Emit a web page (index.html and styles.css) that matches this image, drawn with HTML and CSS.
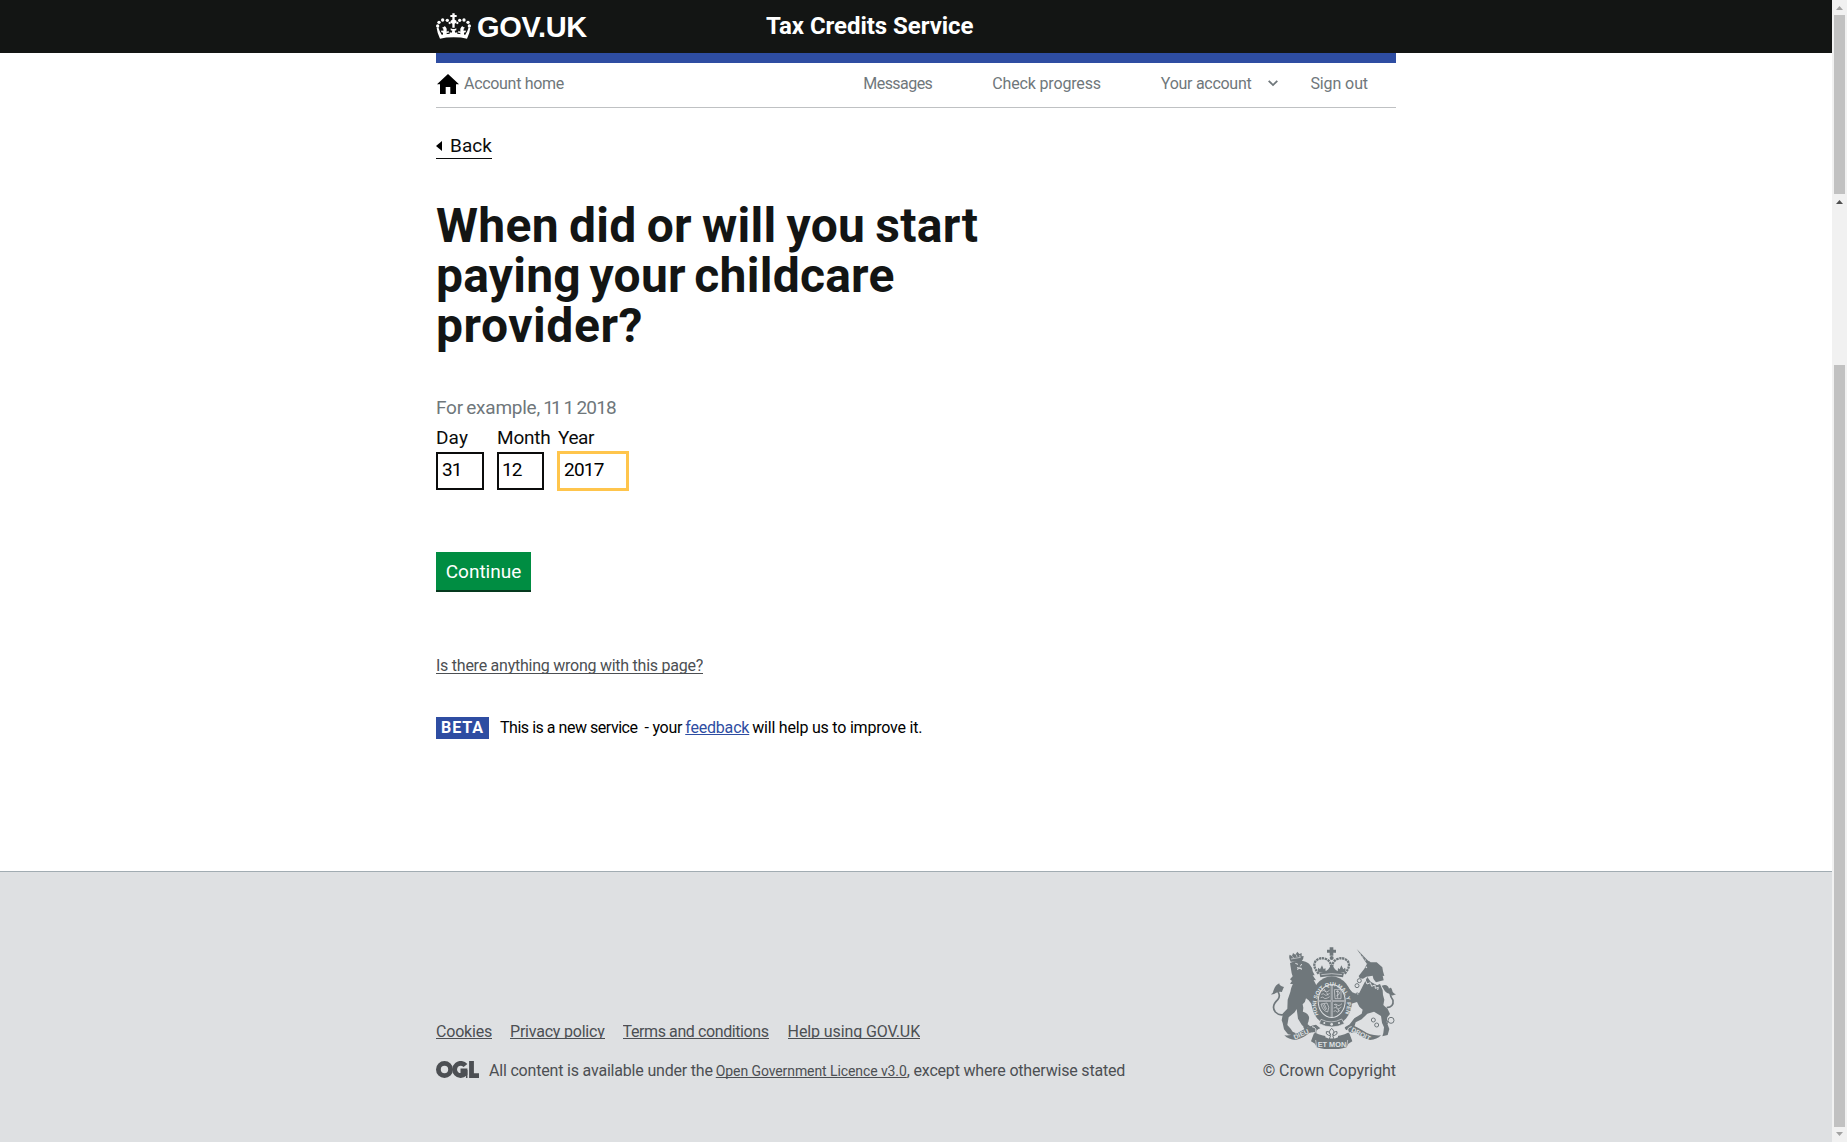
FILE: index.html
```html
<!DOCTYPE html>
<html lang="en">
<head>
<meta charset="utf-8">
<title>Tax Credits Service</title>
<link rel="stylesheet" href="styles.css">
</head>
<body>
<div class="page">
  <header class="header">
    <div class="container header-inner">
      <a class="logo">
        <svg class="crown" viewBox="48 38 105 78" fill="#fff">
          <path d="M97 39h7v5h6v6h-6v8q6 1 6 6-2 5-6 6v12h-7V70q-5-1-6-6 1-5 6-6v-8h-6v-6h6z"/>
          <path d="M50 83l5-2q3 12 10 22 35-6 71 0 7-10 10-22l5 2q-2 17-10 32-16-4-40-4t-41 4q-8-15-10-32z"/>
          <path d="M71 80q3-4 6 0l3 5v9l6-3v7l-6-1v7H69v-7l-6-2 2-5 5 2v-7l-4-3zM130 80q-3-4-6 0l-3 5v9l-6-3v7l6-1v7h11v-7l6-2-2-5-5 2v-7l4-3zM97 86l-5-2v6l5 1-2 6-6-1v7h23v-7l-6 1-2-6 5-1v-6l-5 2z"/>
          <circle cx="53" cy="77" r="5"/><circle cx="57" cy="66" r="5"/><circle cx="68" cy="59" r="5"/><circle cx="82" cy="60" r="5"/><circle cx="89" cy="68" r="3.5"/>
          <circle cx="148" cy="77" r="5"/><circle cx="144" cy="66" r="5"/><circle cx="132" cy="59" r="5"/><circle cx="119" cy="60" r="5"/><circle cx="112" cy="68" r="3.5"/>
        </svg>
        <span class="logo-text">GOV.UK</span>
      </a>
      <span class="service">Tax Credits Service</span>
    </div>
  </header>

  <main class="container main">
    <nav class="nav">
      <a class="home">
        <svg class="home-icon" viewBox="0 0 22 20"><path d="M11 0 0 10.2h3V20h5.700v-7h4.600v7H19v-9.800h3z"/></svg>
        <span class="t-home">Account home</span>
      </a>
      <a class="t-messages">Messages</a>
      <a class="t-progress">Check progress</a>
      <a class="t-account">Your account</a>
      <svg class="chevron" viewBox="0 0 10 7"><path d="M.7.8 5 5.100 9.300.8" fill="none" stroke="#6f777b" stroke-width="1.800"/></svg>
      <a class="t-signout">Sign out</a>
    </nav>

    <a class="back"><svg class="back-icon" viewBox="0 0 6 10"><path d="M6 0v10L0 5z"/></svg>Back</a>

    <h1 class="title">
      <span class="line line-1">When did or will you start</span>
      <span class="line line-2">paying your childcare</span>
      <span class="line line-3">provider?</span>
    </h1>

    <p class="hint">For example, <span class="sample">11 1</span> <span class="sample-year">2018</span></p>
    <div class="date">
      <label class="field day"><span class="t-day">Day</span><span class="box"><span class="two">31</span></span></label>
      <label class="field month"><span class="t-month">Month</span><span class="box"><span class="two">12</span></span></label>
      <label class="field year"><span class="t-year">Year</span><span class="box focus"><span class="four">2017</span></span></label>
    </div>

    <button class="button">Continue</button>

    <div class="report"><a class="cut t-report">Is there anything wrong with this page?</a></div>

    <div class="phase">
      <strong class="tag">BETA</strong>
      <span class="t-new">This is a new service</span>
      <span class="t-your">- your</span>
      <a class="feedback">feedback</a>
      <span class="t-help">will help us to improve it.</span>
    </div>
  </main>

  <footer class="footer">
    <div class="container footer-inner">
      <div class="meta">
        <div class="links">
          <a class="cut t-cookies">Cookies</a>
          <a class="cut t-privacy">Privacy policy</a>
          <a class="cut t-terms">Terms and conditions</a>
          <a class="cut t-using">Help using GOV.UK</a>
        </div>
        <div class="licence">
          <svg class="ogl" viewBox="0 0 43 17" fill="none" stroke="#4c4f53" stroke-width="4.800">
            <circle cx="8.500" cy="8.500" r="6.100"/>
            <path d="M29.500 4.600A6.100 6.100 0 1 0 29 12.800V9.900h-4.500"/>
            <path d="M30.700 9v8" stroke-width="1.500"/>
            <path d="M35.500 0v14.600H43"/>
          </svg>
          <span class="t-content">All content is available under the</span>
          <a class="t-ogl">Open Government Licence v3.0</a><span class="t-except">, except where otherwise stated</span>
        </div>
      </div>
      <div class="copyright">
        <svg class="crest" viewBox="18 21 375 306" fill="#6f777b">
          <!-- crown -->
          <path d="M194 22h11v7h8v9h-8v9h-11v-9h-8v-9h8z"/>
          <circle cx="200" cy="54" r="6"/>
          <g fill="none" stroke="#6f777b" stroke-width="7" stroke-dasharray="7 2">
            <path d="M161 101Q140 77 153 62q14-13 34-3 11 7 12 25"/>
            <path d="M239 101q21-24 8-39-14-13-34-3-11 7-12 25"/>
          </g>
          <path d="M160 97q-4-10 0-14l5 5 6-12 5 12 5-4 1 10 8-6 10-15 10 15 8 6 1-10 5 4 5-12 6 12 5-5q4 4 0 14z"/>
          <path d="M163 98q37-8 74 0l-3 14q-34-7-68 0z"/>
          <path d="M169 104q31-6 62 0" fill="none" stroke="#dee0e2" stroke-width="2"/>
          <!-- lion -->
          <path d="M77 65q-7-14-3-21l7 4 3-9 7 5 6-9 6 7 7-3v10l6-1q0 9-6 16z"/>
          <path d="M78 57l29-5M82 49l4 5M94 44l2 7M104 45l1 6" stroke="#dee0e2" stroke-width="2" fill="none"/>
          <path d="M75 69q18-9 39-6 17 4 21 12 8 8 8 19l6 12-6 0 10 15-7-1 8 16 2 20 4 30-4 18-12-6-13-17-8-6q-1 11-10 18l2 10-2 17 3 16 13 8-1 9 10 8-16 3-11-8-12-20-4-29-6 10-18 15-4 23 10 11 6 9 10 5-10 6-14-3-12-15-4-19-3-8 4-21 13-14 1-27 8-23q3-17 8-23l-9-2 6-8-6-5 8-9-3-9z"/>
          <path d="M108 214q18 3 24 16 2 14-8 24l4 12 12 4-3 8-14-2-8-14 2-16-14-16z"/>
          <path d="M91 70l8 3M110 72l-4 7M96 88l8-3 7 3M96 83l14 2" stroke="#dee0e2" stroke-width="3" fill="none"/>
          <path d="M75 211q-25 24-44 5-14-18 8-38 8-11 0-23" fill="none" stroke="#6f777b" stroke-width="5"/>
          <path d="M18 163q7-4 8-13 6-16 17-20-2 7 14 11-6 12-6 15-9-2-17 2-8 6-16 5z"/>
          <!-- unicorn -->
          <path d="M275 27l38 39-7 6z"/>
          <path d="M285 39l2 7M293 48l1 7M300 56l2 7" stroke="#dee0e2" stroke-width="1.500"/>
          <path d="M311 62l6 5 18 0 17 15 2 12 4 14-5-1 3 14-9 2-14 4q-10-10-10-20l-19 3-10 6-10-1-3-7 17-22z"/>
          <circle cx="304" cy="82" r="2.500" fill="#dee0e2"/>
          <path d="M307 111l10 14 19 11 9-4 8 19 1 14 4 14-3 16 13 12 7 15-8 10-2 14 8 21-5 18-16 4 3-10 2-17-6-14-3-20-21-13-20 6-17 17-18 9-5 17-15 7-9-1-4-8 14-8 15-19 22-14 3-12-10-9-7-14-19 6-17-6-8-10-10-2-12-11 6-5-9-13 6-6 15 4 8 15 11 11 11-1-15-11-7-6-10-17 9-5 13 11 14 17 18 7z"/>
          <path d="M286 120l8 10 7-10 5 12 10-4 4 11 10-4 1 10 9-3-2 8" fill="none" stroke="#dee0e2" stroke-width="3"/>
          <path d="M365 203q22-2 19-22-7-9-9-22" fill="none" stroke="#6f777b" stroke-width="5"/>
          <path d="M350 137q18-7 22 9 7-9 11 10 4 5 10 7-14 7-18-1-10-2-15-8-3-5-10-17z"/>
          <g fill="none" stroke="#6f777b" stroke-width="3">
            <circle cx="325" cy="240" r="6"/><circle cx="335" cy="255" r="6"/><circle cx="361" cy="247" r="7"/><circle cx="378" cy="241" r="9"/><circle cx="283" cy="122" r="6"/><circle cx="276" cy="137" r="6"/><circle cx="277" cy="164" r="5"/>
          </g>
          <!-- garter and shield -->
          <ellipse cx="200" cy="183" rx="61" ry="74"/>
          <ellipse cx="200" cy="183" rx="42" ry="51" fill="#dee0e2"/>
          <ellipse cx="200" cy="183" rx="39" ry="48"/>
          <path d="M200 134v97M161 183h78" stroke="#dee0e2" stroke-width="5"/>
          <path d="M200 134v97M161 183h78" stroke="#6f777b" stroke-width="2"/>
          <g fill="none" stroke="#dee0e2" stroke-width="2">
            <path d="M171 153q7-4 10 1t13-4M169 163q7-4 10 1t15-4M167 173q7-4 10 1t17-4M178 147l4 9M185 158l4 8"/>
            <path d="M208 149h20v27h-18zM213 155q7-4 10 2t-9 11M218 151v23"/>
            <path d="M168 192l18-3q10 12 2 27-16-4-20-24M173 193l9 17M178 192l7 16"/>
            <path d="M207 194q7-4 10 1t14-4M206 204q7-4 10 1t13-4M206 214q7-4 9 1t9-4M212 194l4 9M219 206l3 8"/>
          </g>
          <path id="garter" d="M161 224a46 56 0 1 1 78 0" fill="none"/>
          <text class="motto" fill="#dee0e2" font-size="17"><textPath href="#garter">HONI SOIT QUI MAL Y PENSE</textPath></text>
          <path d="M168 238q31 16 62-1l8 14q-37 20-75 0z" stroke="#dee0e2" stroke-width="2"/>
          <circle cx="178" cy="249" r="3" fill="#dee0e2"/><circle cx="200" cy="253" r="4" fill="#dee0e2"/><circle cx="222" cy="249" r="3" fill="#dee0e2"/>
          <!-- scroll -->
          <path d="M58 286q30 2 49-12 25-17 46-20l13 11q-13 3-12 14l-19-2q-19 18-43 23-22-1-34-14z"/>
          <path d="M348 286q-33 2-51-12-23-17-44-20l-14 11q13 3 12 14l21-2q19 18 43 23 21-1 33-14z"/>
          <path d="M148 277q51 26 104 0l10 27-12 7-5 11q-45 13-90 0l-5-11-12-7z"/>
          <path d="M141 260q15 3 11 15-2 6-9 3M260 260q-15 3-11 15 2 6 9 3" fill="none" stroke="#dee0e2" stroke-width="3"/>
          <path d="M155 322l-3-22M245 322l3-22" stroke="#dee0e2" stroke-width="2"/>
          <path d="M181 267q20-12 38 0v25q-19 10-38 0z" fill="#dee0e2"/>
          <path d="M200 265q12 11 3 20 2-12 13-10 3 8-7 11l-6 1 4 10h-14l4-10-6-1q-10-3-7-11 11-2 13 10-9-9 3-20z" fill="none" stroke="#6f777b" stroke-width="3"/>
          <text class="motto" fill="#dee0e2" font-size="22" x="158" y="320">ET MON</text>
          <text class="motto" fill="#dee0e2" font-size="20" transform="translate(90 299) rotate(-25)">DIEU</text>
          <text class="motto" fill="#dee0e2" font-size="20" transform="translate(257 274) rotate(27)">DROIT</text>
        </svg>
        <span class="t-crown">© Crown Copyright</span>
      </div>
    </div>
  </footer>
</div>

<div class="scrollbar">
  <i class="arrow up light"></i>
  <i class="thumb first"></i>
  <i class="arrow up"></i>
  <i class="thumb second"></i>
  <i class="arrow down light"></i>
</div>
</body>
</html>
```
FILE: styles.css
```css
* { box-sizing: border-box; }

body {
  margin: 0;
  display: flex;
  height: 1142px;
  overflow: hidden;
  background: #fff;
  color: #0b0c0c;
  font: 16px/20px Roboto, Arial, sans-serif;
}

svg { display: block; flex: none; }
a, span, strong { white-space: nowrap; }

.page { flex: 1; display: flex; flex-direction: column; }
.container { width: 960px; margin: 0 auto; }

/* Header */
.header { height: 53px; background: #131514; color: #fff; }
.header-inner { display: flex; height: 53px; }
.logo { display: flex; width: 330px; }
.crown { width: 35px; height: 26px; margin-top: 13px; }
.logo-text {
  margin-left: 6px;
  font: bold 29px/54px "Liberation Sans", Arial, sans-serif;
  letter-spacing: -.3px;
}
.service { font-weight: 700; font-size: 24px; line-height: 53px; letter-spacing: -.05px; }

/* Account navigation */
.main { border-top: 10px solid #2e4da2; height: 818px; }
.nav {
  display: flex;
  align-items: center;
  height: 45px;
  padding: 0 28px 2px 0;
  border-bottom: 1px solid #bfc1c3;
  color: #6f777b;
}
.home { display: flex; align-items: center; margin-right: auto; }
.home-icon { width: 22px; height: 20px; margin: 0 5px 0 1px; fill: #000; }
.t-home { letter-spacing: -.302px; }
.t-messages { letter-spacing: -.551px; }
.t-progress { letter-spacing: -.16px; margin-left: 60px; }
.t-account { letter-spacing: -.28px; margin-left: 60px; }
.chevron { width: 10px; height: 7px; margin: 0 32px 0 17px; position: relative; top: -1px; }
.t-signout { letter-spacing: -.095px; }

/* Back link */
.back {
  display: flex;
  align-items: center;
  width: 56px;
  height: 25px;
  margin-top: 26px;
  border-bottom: 1px solid #0b0c0c;
  font-size: 19px;
  line-height: 24px;
  letter-spacing: .063px;
}
.back-icon { width: 6px; height: 10px; margin-right: 8px; }

/* Question */
.title { margin: 42px 0 0; font-size: 48px; line-height: 50px; font-weight: 700; color: #131514; }
.line { display: block; }
.line-1 { letter-spacing: .28px; word-spacing: -2.1px; }
.line-2 { letter-spacing: .25px; word-spacing: -3.7px; }
.line-3 { letter-spacing: .55px; }

.hint { margin: 44px 0 5px; font-size: 19px; line-height: 25px; letter-spacing: -.25px; word-spacing: -1px; color: #6f777b; }
.sample { letter-spacing: -3px; word-spacing: 3px; }
.sample-year { letter-spacing: -.9px; margin-left: 2px; }

.date { display: flex; font-size: 19px; line-height: 25px; }
.field { display: flex; flex-direction: column; }
.day { width: 61px; }
.month { width: 61px; }
.box {
  display: flex;
  align-items: center;
  width: 48px;
  height: 38px;
  margin-top: 2px;
  padding: 0 0 3px 4px;
  border: 2px solid #0b0c0c;
  color: #000;
}
.month .box { width: 47px; padding-left: 3px; }
.focus { width: 70px; border-color: #ffc54c; box-shadow: 0 0 0 1px #ffc54c; }
.t-day { letter-spacing: .115px; }
.t-month { letter-spacing: -.2px; }
.t-year { letter-spacing: -.418px; }
.two { letter-spacing: -1px; }
.four { letter-spacing: -.8px; }

.button {
  display: block;
  width: 95px;
  height: 40px;
  margin: 62px 0 64px;
  padding: 1px 0 0;
  border: 0;
  border-bottom: 2px solid #05391e;
  background: #008d42;
  color: #fff;
  font: 19px/37px Roboto, Arial, sans-serif;
  letter-spacing: 0;
}

/* Links whose underline trims the descenders */
.cut { display: block; height: 17px; overflow: hidden; border-bottom: 1px solid #4c4f53; color: #4c4f53; }
.report { display: flex; height: 20px; margin-bottom: 41px; }
.report .cut { height: 18px; }
.t-report { letter-spacing: -.248px; }

/* Phase banner */
.phase { display: flex; align-items: center; height: 22px; color: #000; }
.tag {
  width: 53px;
  height: 22px;
  margin-right: 11px;
  padding-left: 5px;
  background: #2e4da2;
  color: #fff;
  line-height: 21px;
  letter-spacing: .949px;
}
.t-new { letter-spacing: -.47px; margin-right: 7px; }
.t-your { letter-spacing: -.25px; margin-right: 3px; }
.feedback {
  letter-spacing: -.193px;
  margin-right: 3px;
  color: #2e4da2;
  text-decoration: underline 1px;
  text-underline-offset: 1px;
  text-decoration-skip-ink: none;
}
.t-help { letter-spacing: -.209px; }

/* Footer */
.footer { flex: 1; border-top: 1px solid #a1acb2; background: #dee0e2; color: #4c4f53; }
.footer-inner { display: flex; justify-content: space-between; padding-top: 75px; }
.meta { padding-top: 75px; }
.links { display: flex; height: 39px; }
.t-cookies { letter-spacing: -.201px; margin-right: 18px; }
.t-privacy { letter-spacing: -.21px; margin-right: 18px; }
.t-terms { letter-spacing: -.403px; margin-right: 19px; }
.t-using { letter-spacing: -.106px; }
.licence { display: flex; height: 20px; }
.ogl { width: 43px; height: 17px; margin-right: 10px; }
.t-content { letter-spacing: -.19px; margin-right: 3px; }
.t-ogl {
  font-size: 14px;
  line-height: 21px;
  letter-spacing: -.089px;
  text-decoration: underline 1px;
  text-underline-offset: 1px;
  text-decoration-skip-ink: none;
}
.t-except { letter-spacing: -.19px; }
.copyright { display: flex; flex-direction: column; align-items: flex-end; }
.crest { width: 125px; height: 102px; margin-bottom: 12px; }
.motto {
  font-family: "Liberation Sans", Arial, sans-serif;
  font-weight: 700;
  text-rendering: geometricPrecision;
}
.t-crown { letter-spacing: -.07px; }

/* Window scrollbar */
.scrollbar { display: flex; flex-direction: column; align-items: center; width: 15px; background: #f1f1f1; }
.thumb { width: 11px; background: #c1c1c1; }
.first { height: 179px; margin-top: 5px; }
.second { height: 762px; margin-top: 161px; }
.arrow { width: 7px; height: 4px; margin-top: 6px; background: #505050; }
.up { clip-path: polygon(50% 0, 100% 100%, 0 100%); }
.down { clip-path: polygon(0 0, 100% 0, 50% 100%); margin-top: 5px; }
.light { background: #a3a3a3; }
```
